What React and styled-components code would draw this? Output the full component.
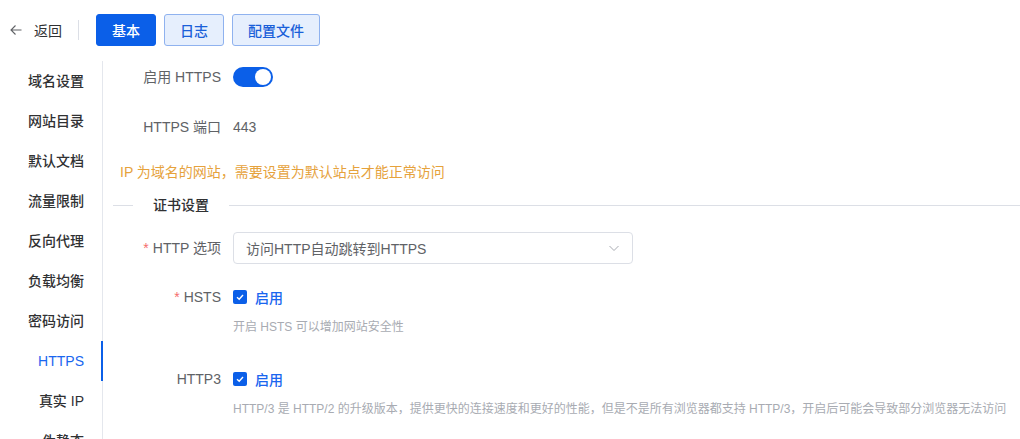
import React from 'react';
import styled, { createGlobalStyle } from 'styled-components';

const GlobalStyle = createGlobalStyle`
  html, body {
    margin: 0;
    padding: 0;
    background: #ffffff;
    font-family: "Liberation Sans", "Noto Sans CJK SC", sans-serif;
    overflow: hidden;
  }
`;

const Page = styled.div`
  width: 1020px;
  height: 439px;
  overflow: hidden;
`;

const Header = styled.div`
  height: 61px;
  padding: 0 10px 1px;
  display: flex;
  align-items: center;
  box-sizing: border-box;
`;

const Back = styled.div`
  display: flex;
  align-items: center;
  gap: 12px;
  font-size: 14px;
  color: #303133;
  cursor: pointer;
`;

const VLine = styled.div`
  width: 1px;
  height: 20px;
  background: #dcdfe6;
  margin: 0 17px 0 16px;
`;

const Tabs = styled.div`
  display: flex;
  gap: 8px;
`;

const TabButton = styled.button`
  height: 32px;
  width: ${p => p.$w}px;
  padding: 0;
  border-radius: 3px;
  font-family: inherit;
  font-size: 14px;
  font-weight: 500;
  box-sizing: border-box;
  border: 1px solid ${p => (p.$active ? '#0b5fe8' : '#8fb2ef')};
  background: ${p => (p.$active ? '#0b5fe8' : '#e6effd')};
  color: ${p => (p.$active ? '#ffffff' : '#1a5fd9')};
`;

const Body = styled.div`
  display: flex;
`;

const Side = styled.div`
  width: 103px;
  border-right: 1px solid #e4e7ed;
  box-sizing: border-box;
  height: 400px;
`;

const SideItem = styled.div`
  height: 40px;
  line-height: 40px;
  text-align: right;
  padding-right: 17px;
  font-size: 14px;
  font-weight: 500;
  color: ${p => (p.$active ? '#1a66ef' : '#303133')};
  margin-right: -1px;
  border-right: 2px solid ${p => (p.$active ? '#0b5fe8' : 'transparent')};
`;

const Content = styled.div`
  flex: 1;
  padding-left: 10px;
`;

const FormItem = styled.div`
  display: grid;
  grid-template-columns: 120px 1fr;
  margin-bottom: ${p => p.$mb || 0}px;
`;

const Label = styled.div`
  text-align: right;
  padding-right: 12px;
  line-height: 32px;
  font-size: 14px;
  color: #606266;
`;

const Star = styled.span`
  color: #f56c6c;
  margin-right: 4px;
`;

const Control = styled.div`
  display: flex;
  flex-direction: column;
`;

const Line = styled.div`
  height: 32px;
  display: flex;
  align-items: center;
  font-size: 14px;
  color: #606266;
`;

const Switch = styled.div`
  width: 40px;
  height: 20px;
  border-radius: 10px;
  background: #0b5fe8;
  position: relative;
  &::after {
    content: '';
    position: absolute;
    right: 2px;
    top: 2px;
    width: 16px;
    height: 16px;
    border-radius: 50%;
    background: #fff;
  }
`;

const Warning = styled.div`
  margin: 0 0 0 7px;
  line-height: 22px;
  font-size: 14px;
  color: #e6a23c;
`;

const Divider = styled.div`
  display: flex;
  align-items: center;
  margin: 11px 0 16px;
  &::before, &::after {
    content: '';
    height: 1px;
    background: #dcdfe6;
  }
  &::before {
    width: 20px;
  }
  &::after {
    flex: 1;
  }
`;

const DividerText = styled.span`
  padding: 0 20px;
  line-height: 22px;
  font-size: 14px;
  font-weight: 500;
  color: #303133;
`;

const Select = styled.div`
  width: 400px;
  height: 32px;
  box-sizing: border-box;
  border: 1px solid #dcdfe6;
  border-radius: 4px;
  display: flex;
  align-items: center;
  justify-content: space-between;
  padding: 0 12px;
  font-size: 14px;
  color: #606266;
`;

const Check = styled.div`
  display: flex;
  align-items: center;
  gap: 8px;
  font-size: 14px;
  font-weight: 500;
  color: #1a66ef;
`;

const Box = styled.span`
  width: 14px;
  height: 14px;
  border-radius: 2px;
  background: #0b5fe8;
  display: flex;
  align-items: center;
  justify-content: center;
`;

const Hint = styled.div`
  margin-top: 4px;
  line-height: 20px;
  font-size: 12px;
  color: #a8abb2;
  white-space: nowrap;
`;

const sideItems = ['域名设置', '网站目录', '默认文档', '流量限制', '反向代理', '负载均衡', '密码访问', 'HTTPS', '真实 IP', '伪静态'];

const Checked = () => (
  <Check>
    <Box>
      <svg width="10" height="10" viewBox="0 0 10 10">
        <path d="M2 5.2 L4.2 7.2 L8 3" fill="none" stroke="#fff" strokeWidth="1.4" />
      </svg>
    </Box>
    启用
  </Check>
);

export default function App() {
  return (
    <Page>
      <GlobalStyle />
      <Header>
        <Back>
          <svg width="12" height="12" viewBox="0 0 12 12">
            <path d="M11.5 6 H1 M5.5 1.5 L1 6 L5.5 10.5" fill="none" stroke="#606266" strokeWidth="1.1" />
          </svg>
          返回
        </Back>
        <VLine />
        <Tabs>
          <TabButton $active $w={60}>基本</TabButton>
          <TabButton $w={60}>日志</TabButton>
          <TabButton $w={88}>配置文件</TabButton>
        </Tabs>
      </Header>
      <Body>
        <Side>
          {sideItems.map(s => (
            <SideItem key={s} $active={s === 'HTTPS'}>{s}</SideItem>
          ))}
        </Side>
        <Content>
          <FormItem $mb={18}>
            <Label>启用 HTTPS</Label>
            <Control>
              <Line><Switch /></Line>
            </Control>
          </FormItem>
          <FormItem $mb={18}>
            <Label>HTTPS 端口</Label>
            <Control>
              <Line>443</Line>
            </Control>
          </FormItem>
          <Warning>IP 为域名的网站，需要设置为默认站点才能正常访问</Warning>
          <Divider><DividerText>证书设置</DividerText></Divider>
          <FormItem $mb={17}>
            <Label><Star>*</Star>HTTP 选项</Label>
            <Control>
              <Select>
                访问HTTP自动跳转到HTTPS
                <svg width="12" height="12" viewBox="0 0 12 12">
                  <path d="M1.5 4 L6 8.5 L10.5 4" fill="none" stroke="#a8abb2" strokeWidth="1" />
                </svg>
              </Select>
            </Control>
          </FormItem>
          <FormItem $mb={26}>
            <Label><Star>*</Star>HSTS</Label>
            <Control>
              <Line><Checked /></Line>
              <Hint>开启 HSTS 可以增加网站安全性</Hint>
            </Control>
          </FormItem>
          <FormItem>
            <Label>HTTP3</Label>
            <Control>
              <Line><Checked /></Line>
              <Hint>HTTP/3 是 HTTP/2 的升级版本，提供更快的连接速度和更好的性能，但是不是所有浏览器都支持 HTTP/3，开启后可能会导致部分浏览器无法访问</Hint>
            </Control>
          </FormItem>
        </Content>
      </Body>
    </Page>
  );
}
